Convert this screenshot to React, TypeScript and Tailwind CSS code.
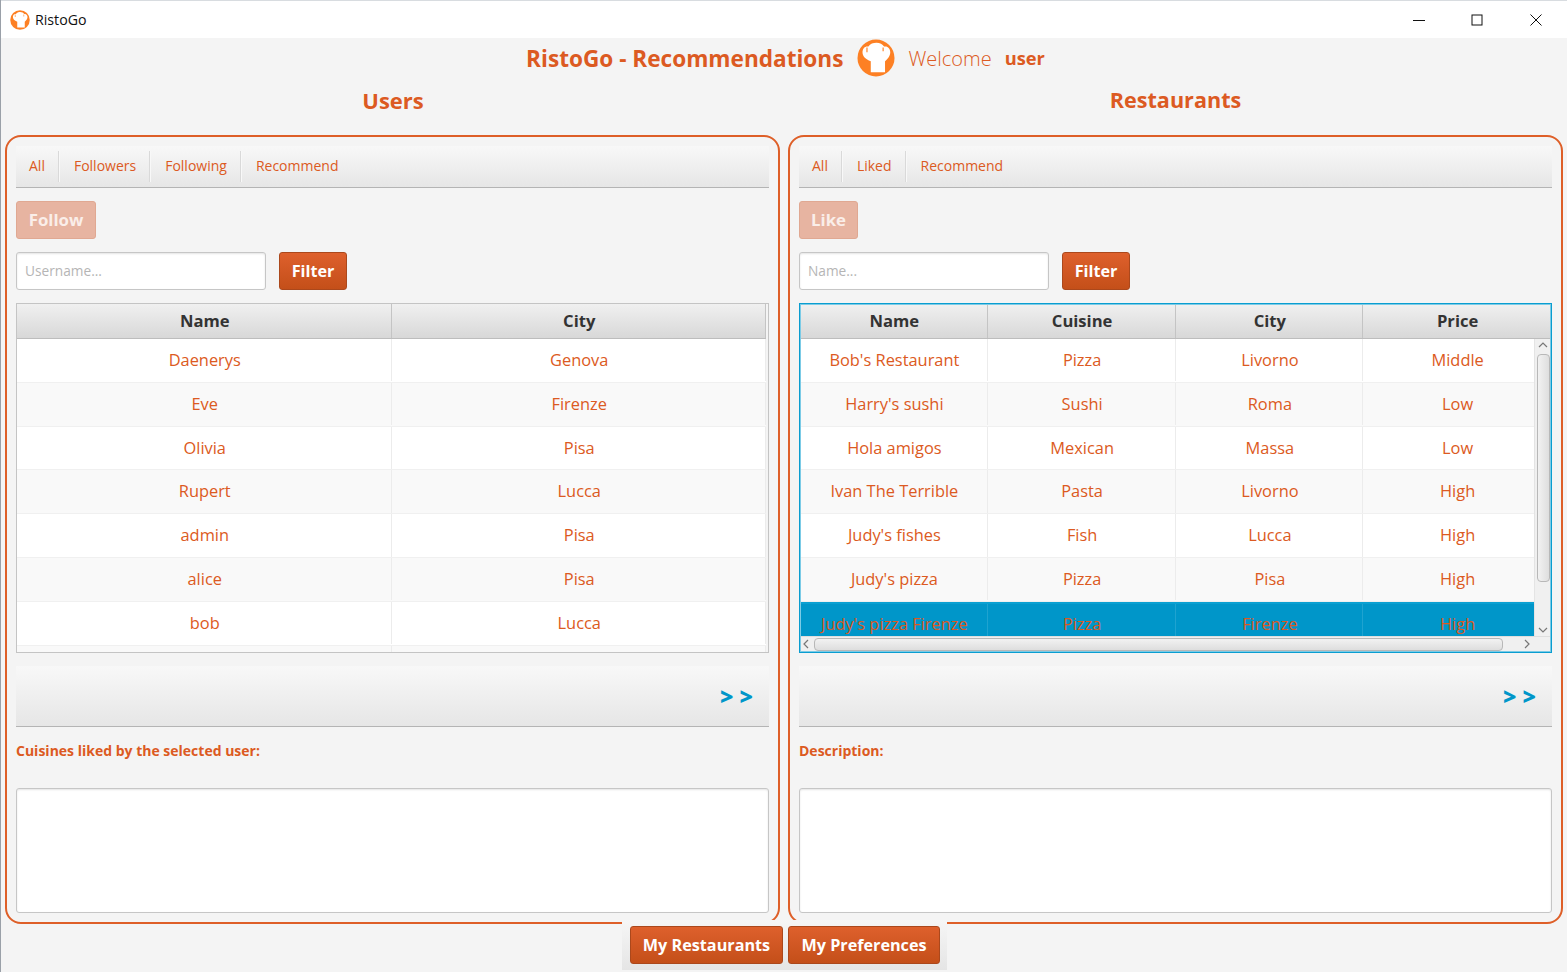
const Logo = ({ size }: { size: number }) => (
  <svg width={size} height={size} viewBox="0 0 40 40">
    <circle cx="20" cy="20" r="19.5" fill="#fd8024" />
    <path
      d="M14.500 35V23.500C9 21.500 5.500 18 5.800 13.500C6 9.500 9 7 12 8C14 5 17 4 20.500 4C24 4 27 5.500 28.500 8C32 7 35 10 35 14C35 18 32 21.500 29.500 23.500V35Z"
      fill="#fff"
    />
    <path d="M10.500 9V14M27.500 9V13" stroke="#fd8024" strokeWidth="1.2" />
  </svg>
);

const Tabs = ({ items }: { items: string[] }) => (
  <div className="flex h-[42px] items-center border-b border-[#b4b4b4] bg-gradient-to-b from-[#f8f8f8] to-[#e6e6e6] pl-[13px] text-[14px]">
    {items.map((item, i) => (
      <div key={item} className="flex h-[31px] items-center">
        <span className="pb-[3px]">{item}</span>
        {i < items.length - 1 && <div className="ml-[13px] mr-[14px] h-[31px] w-[2px] border-r border-[#f8f8f8] bg-[#d9d9d9]" />}
      </div>
    ))}
  </div>
);

const Btn = ({ label, className }: { label: string; className: string }) => (
  <button className={"flex h-[38px] items-center justify-center rounded-[3px] border border-[#ab481c] bg-gradient-to-b from-[#de602c] to-[#c44f19] text-[16.2px] font-bold text-white " + className}>
    {label}
  </button>
);

const ScrollArrow = ({ d, className }: { d: string; className: string }) => (
  <svg width="10" height="10" viewBox="0 0 10 10" className={"absolute " + className}>
    <path d={d} fill="none" stroke="#777" strokeWidth="1.2" />
  </svg>
);

const DataTable = ({
  cols,
  rows,
  selected,
  scrollbars,
}: {
  cols: string[];
  rows: string[][];
  selected?: number;
  scrollbars?: boolean;
}) => (
  <div className={"relative mt-[13px] h-[350px] overflow-hidden border " + (scrollbars ? "border-[#0a9dd0]" : "border-[#c4c4c4] pr-[2px]")}>
    <div className="flex h-[35px] border-b border-[#bdbdbd] bg-gradient-to-b from-[#f0f0f0] to-[#d8d8d8] text-[16.6px] font-bold text-[#333]">
      {cols.map((c) => (
        <div key={c} className="flex flex-1 items-center justify-center border-r border-[#c4c4c4] pl-[2px]">
          {c}
        </div>
      ))}
    </div>
    {rows.map((r, i) => (
      <div
        key={i}
        className={
          "flex h-[43.83px] text-[16.4px] " +
          (i === selected ? "border-t-2 border-[#0aa0d2] bg-[#0096c9] pb-[2px]" : i % 2 ? "border-b border-[#f0f0f0] bg-[#f9f9f9] pb-[0.5px]" : "border-b border-[#f0f0f0] bg-white pb-[0.5px]")
        }
      >
        {r.map((cell, j) => (
          <div key={j} className={"flex flex-1 items-center justify-center border-r pl-[2px] " + (i === selected ? "border-[#1fa3d0]" : "border-[#ececec]")}>
            {cell}
          </div>
        ))}
      </div>
    ))}
    {scrollbars && (
      <>
        <div className="absolute bottom-[15px] right-0 top-[35px] w-[17px] border-l border-[#e4e4e4] bg-[#f0f0f0]">
          <ScrollArrow d="M1 7L5 3L9 7" className="left-[3px] top-[1px]" />
          <div className="absolute left-[2px] right-[1px] top-[15px] h-[228px] rounded-[4px] border border-[#b8b8b8] bg-gradient-to-r from-[#f2f2f2] to-[#dedede]" />
          <ScrollArrow d="M1 3L5 7L9 3" className="bottom-[2px] left-[3px]" />
        </div>
        <div className="absolute bottom-0 left-0 right-0 h-[16px] border-t border-[#dedede] bg-[#f0f0f0]">
          <ScrollArrow d="M7 1L3 5L7 9" className="left-[1px] top-[2px]" />
          <div className="absolute left-[14px] top-[1px] h-[13px] w-[689px] rounded-[4px] border border-[#b8b8b8] bg-gradient-to-b from-[#f2f2f2] to-[#dedede]" />
          <ScrollArrow d="M3 1L7 5L3 9" className="right-[19px] top-[2px]" />
        </div>
        <div className="pointer-events-none absolute inset-0 border border-[#7ccbe6]" />
      </>
    )}
  </div>
);

const Panel = ({
  tabs,
  action,
  actionWidth,
  placeholder,
  cols,
  rows,
  selected,
  scrollbars,
  detail,
}: {
  tabs: string[];
  action: string;
  actionWidth: string;
  placeholder: string;
  cols: string[];
  rows: string[][];
  selected?: number;
  scrollbars?: boolean;
  detail: string;
}) => (
  <section className="h-[789px] w-[775px] rounded-[16px] border-2 border-[#de5f28] px-[9px] pt-[9px]">
    <Tabs items={tabs} />
    <button className={"mt-[13px] flex h-[38px] items-center justify-center rounded-[3px] border border-[#e0a892] bg-[#e7b4a1] pb-[1px] text-[16.8px] font-bold text-[#faeee9] " + actionWidth}>
      {action}
    </button>
    <div className="mt-[13px] flex gap-[13px]">
      <div className="flex h-[38px] w-[250px] items-center rounded-[3px] border border-[#c6c6c6] bg-white pl-[8px] pt-[1px] text-[13.7px] text-[#b5b5b5] shadow-[inset_0_1px_2px_#e4e4e4]">
        {placeholder}
      </div>
      <Btn label="Filter" className="w-[68px]" />
    </div>
    <DataTable cols={cols} rows={rows} selected={selected} scrollbars={scrollbars} />
    <div className="mt-[13px] flex h-[61px] items-center justify-end border-b border-[#b4b4b4] bg-gradient-to-b from-[#f8f8f8] to-[#e6e6e6] pr-[16px] pt-[1px] text-[23px] font-extrabold text-[#0096c9]">
      &gt; &gt;
    </div>
    <div className="flex h-[61px] items-start pt-[13px] text-[14px] font-bold">{detail}</div>
    <div className="h-[125px] rounded-[3px] border border-[#c6c6c6] bg-white shadow-[inset_0_1px_2px_#e4e4e4]" />
  </section>
);

const users = [
  ["Daenerys", "Genova"],
  ["Eve", "Firenze"],
  ["Olivia", "Pisa"],
  ["Rupert", "Lucca"],
  ["admin", "Pisa"],
  ["alice", "Pisa"],
  ["bob", "Lucca"],
  ["", ""],
];

const restaurants = [
  ["Bob's Restaurant", "Pizza", "Livorno", "Middle"],
  ["Harry's sushi", "Sushi", "Roma", "Low"],
  ["Hola amigos", "Mexican", "Massa", "Low"],
  ["Ivan The Terrible", "Pasta", "Livorno", "High"],
  ["Judy's fishes", "Fish", "Lucca", "High"],
  ["Judy's pizza", "Pizza", "Pisa", "High"],
  ["Judy's pizza Firenze", "Pizza", "Firenze", "High"],
];

export default function App() {
  return (
    <div className="flex h-[972px] w-full flex-col overflow-hidden border-l border-[#9aa0a8] bg-[#f4f4f4] font-['Open_Sans','Noto_Sans',sans-serif] text-[#dc5a22]">
      {/* title bar */}
      <div className="flex h-[38px] shrink-0 items-center border-t border-[#d8dce0] bg-white pl-[9px] text-[14.2px] text-[#111]">
        <Logo size={20} />
        <span className="ml-[5px]">RistoGo</span>
        <div className="ml-auto flex pr-[1px]">
          <div className="flex w-[58px] justify-center">
            <svg width="12" height="12" viewBox="0 0 12 12"><path d="M0 6.500H12" stroke="#111" /></svg>
          </div>
          <div className="flex w-[58px] justify-center">
            <svg width="12" height="12" viewBox="0 0 12 12"><rect x="1" y="1" width="10" height="10" fill="none" stroke="#111" /></svg>
          </div>
          <div className="flex w-[60px] justify-center">
            <svg width="12" height="12" viewBox="0 0 12 12"><path d="M0.500 0.500L11.500 11.500M11.500 0.500L0.500 11.500" stroke="#111" /></svg>
          </div>
        </div>
      </div>

      <div className="flex h-[42px] shrink-0 items-center justify-center pl-[3px]">
        <span className="text-[22.6px] font-bold">RistoGo - Recommendations</span>
        <span className="ml-[14px] -translate-y-[1px]"><Logo size={38} /></span>
        <span className="ml-[13px] pb-[1px] text-[20px] font-light">Welcome</span>
        <span className="ml-[13px] pb-[2px] text-[18.3px] font-bold">user</span>
      </div>

      <div className="flex h-[55px] shrink-0 pl-[4px]">
        <h2 className="w-[776px] pt-[3px] text-center text-[22px] font-bold leading-[34px]">Users</h2>
        <h2 className="ml-[7px] w-[775px] pt-[3px] text-center text-[21.6px] font-bold leading-[34px]">Restaurants</h2>
      </div>

      <div className="flex shrink-0 gap-[8px] pl-[4px]">
        <Panel
          tabs={["All", "Followers", "Following", "Recommend"]}
          action="Follow"
          actionWidth="w-[80px]"
          placeholder="Username..."
          cols={["Name", "City"]}
          rows={users}
          detail="Cuisines liked by the selected user:"
        />
        <Panel
          tabs={["All", "Liked", "Recommend"]}
          action="Like"
          actionWidth="w-[59px]"
          placeholder="Name..."
          cols={["Name", "Cuisine", "City", "Price"]}
          rows={restaurants}
          selected={6}
          scrollbars
          detail="Description:"
        />
      </div>

      <div className="relative -mt-[4px] ml-[621px] flex h-[50px] w-[325px] shrink-0 gap-[5px] bg-gradient-to-b from-[#f6f6f6] to-[#e5e5e5] pl-[8px] pt-[6px]">
        <Btn label="My Restaurants" className="w-[153px]" />
        <Btn label="My Preferences" className="w-[152px]" />
      </div>
    </div>
  );
}
